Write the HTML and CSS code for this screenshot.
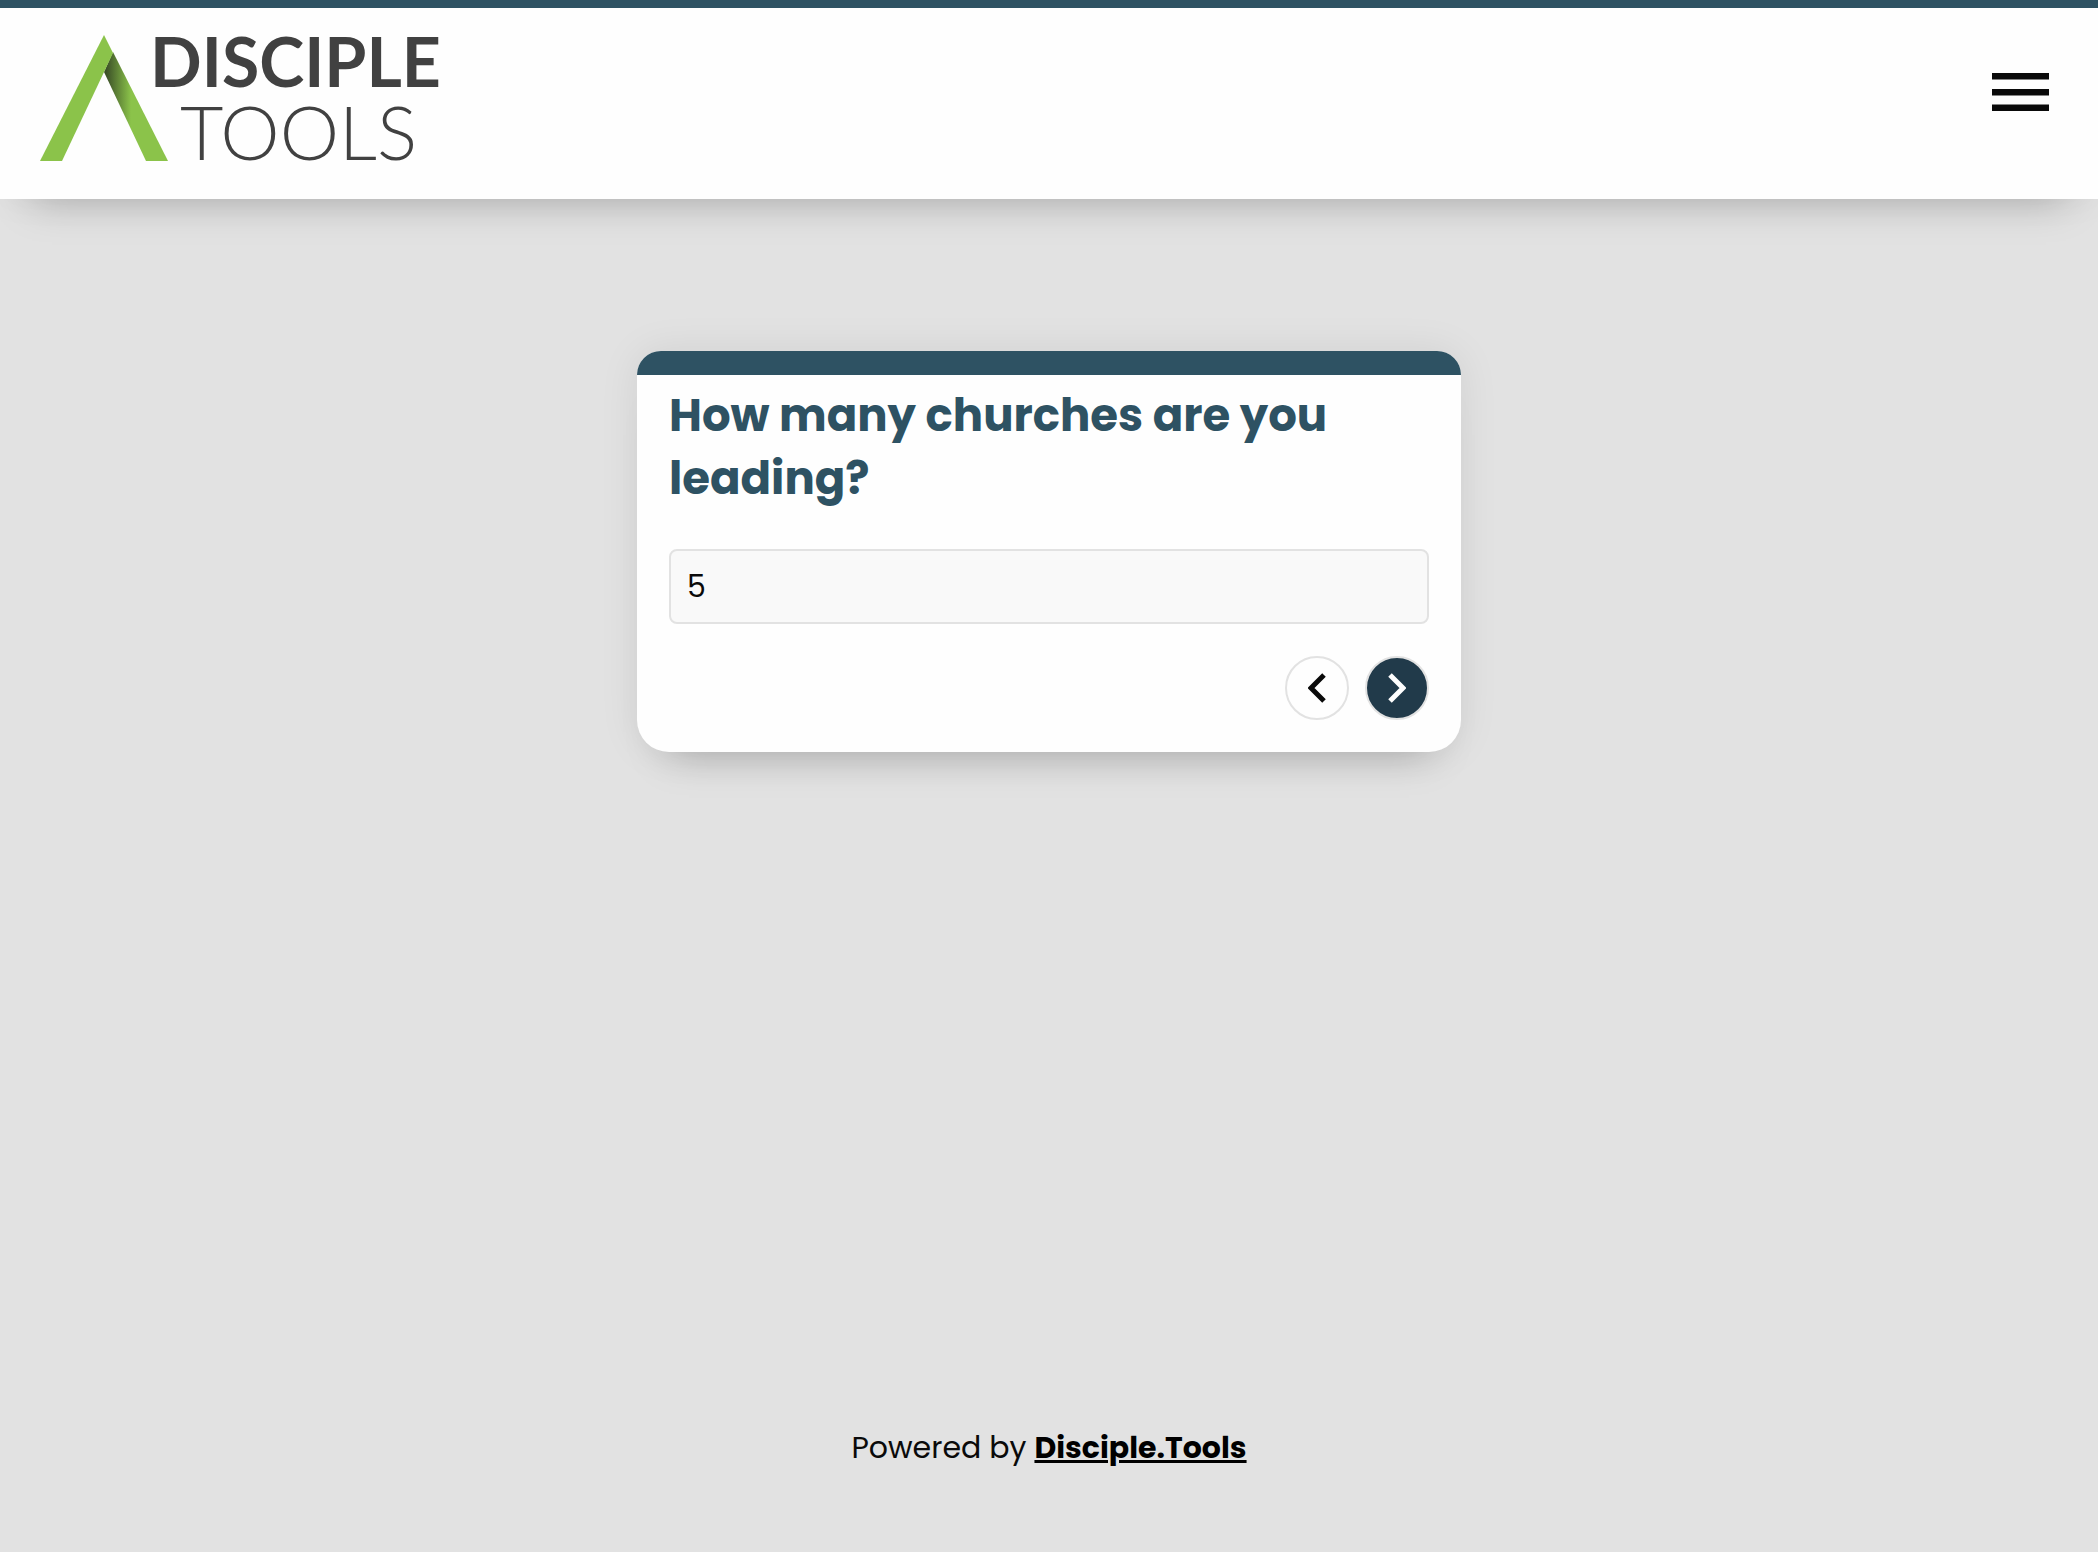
FILE: index.html
```html
<!DOCTYPE html>
<html lang="en">
<head>
  <meta charset="utf-8">
  <meta name="viewport" content="width=device-width, initial-scale=1">
  <title>Disciple.Tools</title>
  <link rel="stylesheet" href="styles.css">
</head>
<body>
  <header class="site-header">
    <a class="logo" href="#" aria-label="Disciple Tools">
      <svg class="logo-art" viewBox="0 0 408 126" role="img" aria-hidden="true">
        <defs>
          <linearGradient id="fold" gradientUnits="userSpaceOnUse" x1="66" y1="0" x2="91" y2="0">
            <stop offset="0" stop-color="#3b4f27"/>
            <stop offset="1" stop-color="#8bc34a"/>
          </linearGradient>
        </defs>
        <path fill="url(#fold)" d="M73 17 128 126H106L64 37Z"/>
        <path fill="#8bc34a" d="M64 0 73 18 22 126H0Z"/>
        <text class="logo-strong" x="110" y="52">DISCIPLE</text>
        <text class="logo-light" x="140" y="125">TOOLS</text>
      </svg>
    </a>
    <button class="menu-button" type="button" aria-label="Menu">
      <svg viewBox="0 0 57 38" width="57" height="38" aria-hidden="true">
        <path fill="#0a0a0a" d="M0 0H57V6.500H0ZM0 16H57V22.500H0ZM0 31.500H57V38H0Z"/>
      </svg>
    </button>
  </header>

  <main class="content">
    <form class="card">
      <div class="card-bar"></div>
      <div class="card-body">
        <label class="question" for="answer">How many churches are you leading?</label>
        <input class="answer" id="answer" type="text" inputmode="numeric" value="5">
        <div class="actions">
          <button class="round-button" type="button" aria-label="Previous">
            <svg viewBox="0 0 18 30" width="18" height="30" aria-hidden="true">
              <path d="M16 2 3 15 16 28" fill="none" stroke="currentColor" stroke-width="5"/>
            </svg>
          </button>
          <button class="round-button round-button-next" type="button" aria-label="Next">
            <svg viewBox="0 0 18 30" width="18" height="30" aria-hidden="true">
              <path d="M2 2 15 15 2 28" fill="none" stroke="currentColor" stroke-width="5"/>
            </svg>
          </button>
        </div>
      </div>
    </form>
  </main>

  <footer class="site-footer">Powered by <a href="#">Disciple.Tools</a></footer>
</body>
</html>
```
FILE: styles.css
```css
* {
  box-sizing: border-box;
}

body {
  display: flex;
  flex-direction: column;
  min-height: 100vh;
  margin: 0;
  background: #e2e2e2;
  color: #0a0a0a;
  font-family: Poppins, Inter, sans-serif;
  font-size: 30px;
}

.site-header {
  display: flex;
  align-items: flex-start;
  justify-content: space-between;
  padding: 27px 40px 38px;
  border-top: 8px solid #2e5263;
  background: #fefefe;
  box-shadow: 0 0 40px rgba(0, 0, 0, 0.04), 0 32px 40px -32px rgba(0, 0, 0, 0.26);
}

.logo-art {
  display: block;
  width: 408px;
  height: 126px;
  overflow: visible;
}

.logo-art text {
  fill: #414141;
  font-family: Lato, sans-serif;
}

.logo-strong {
  font-size: 68px;
  font-weight: 700;
}

.logo-light {
  font-size: 75px;
  font-weight: 300;
}

.menu-button {
  display: flex;
  padding: 38px 9px 34px;
  border: 0;
  background: none;
  cursor: pointer;
}

.content {
  flex: 1;
  padding: 152px 32px 64px;
}

.card {
  max-width: 824px;
  margin: 0 auto;
  border-radius: 24px 24px 32px 32px;
  background: #fefefe;
  box-shadow: 0 0 40px rgba(0, 0, 0, 0.08), 0 32px 40px -32px rgba(0, 0, 0, 0.26);
}

.card-bar {
  height: 24px;
  border-radius: 24px 24px 0 0;
  background: #2e5263;
}

.card-body {
  display: flex;
  flex-direction: column;
  padding: 9px 32px 32px;
}

.question {
  margin-bottom: 39px;
  color: #2e5263;
  font-size: 45px;
  font-weight: 700;
  line-height: 63px;
}

.answer {
  width: 100%;
  height: 75px;
  padding: 0 16px;
  border: 2px solid #e2e2e2;
  border-radius: 8px;
  background: #f9f9f9;
  color: #0a0a0a;
  font: inherit;
}

.actions {
  display: flex;
  justify-content: flex-end;
  gap: 16px;
  margin-top: 32px;
}

.round-button {
  display: flex;
  align-items: center;
  justify-content: center;
  width: 64px;
  height: 64px;
  padding: 0;
  border: 2px solid #e2e2e2;
  border-radius: 50%;
  background: #fefefe;
  color: #0a0a0a;
  cursor: pointer;
}

.round-button-next {
  background: #213a4a;
  color: #fefefe;
}

.site-footer {
  padding: 0 32px 80px;
  line-height: 48px;
  text-align: center;
}

.site-footer a {
  color: #000;
  font-weight: 700;
  text-decoration-thickness: 3px;
}
```
